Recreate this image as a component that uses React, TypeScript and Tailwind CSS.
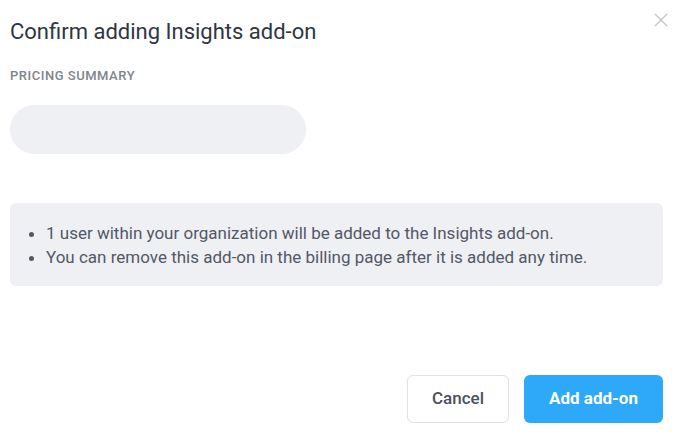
import React from "react";

export default function App() {
  return (
    <div
      className="relative flex h-[447px] w-full flex-col bg-white pb-[24px] pl-[10px] pr-[22px] pt-[18px]"
      style={{ fontFamily: "Roboto, 'Liberation Sans', sans-serif" }}
    >
      <button className="absolute right-[17px] top-[13px] flex h-[14px] w-[14px] items-center justify-center text-[#c4c4c4]">
        <svg width="14" height="14" viewBox="0 0 14 14" fill="none" stroke="currentColor" strokeWidth="1.4">
          <path d="M1 1 L13 13 M13 1 L1 13" />
        </svg>
      </button>

      <h2 className="text-[22px] leading-[28px] text-[#2f3542]">Confirm adding Insights add-on</h2>

      <p className="mt-[22px] text-[13px] font-medium leading-[16px] tracking-[0.04em] text-[#80848b]">PRICING SUMMARY</p>

      <div className="mt-[21px] h-[49px] w-[296px] rounded-full bg-[#eff0f4]" />

      <div className="mt-[49px] flex h-[83px] items-center rounded-md bg-[#eff0f4] pl-[16px]">
        <ul className="list-disc pl-[20px] text-[17px] leading-[24px] text-[#525866]">
          <li>1 user within your organization will be added to the Insights add-on.</li>
          <li>You can remove this add-on in the billing page after it is added any time.</li>
        </ul>
      </div>

      <div className="mt-auto flex justify-end gap-[15px]">
        <button className="h-[48px] w-[102px] rounded-md border border-[#dde1e8] bg-white text-[17px] font-medium text-[#4a5160]">
          Cancel
        </button>
        <button className="h-[48px] w-[139px] rounded-md bg-[#2ea8f9] text-[17px] font-bold text-white">
          Add add-on
        </button>
      </div>
    </div>
  );
}
